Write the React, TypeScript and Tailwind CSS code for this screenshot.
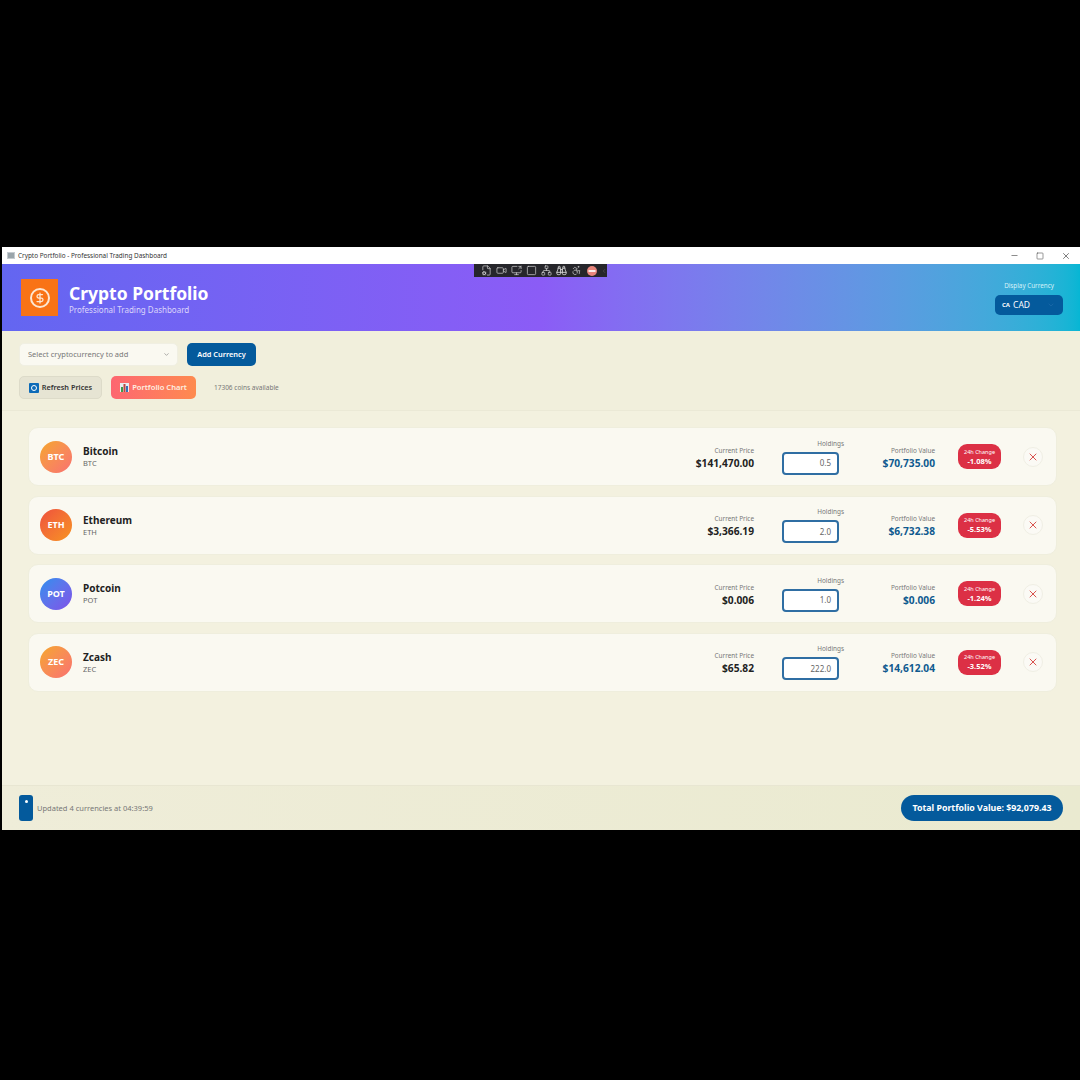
import { ChevronDown, DollarSign, Minus, Square, X, Video, ScreenShare, Accessibility, FileCog, Network, ChevronLeft, Binoculars } from 'lucide-react'

const coins = [
  { name: 'Bitcoin', sym: 'BTC', price: '$141,470.00', qty: '0.5', value: '$70,735.00', change: '-1.08%', avatar: 'bg-gradient-to-br from-[#f5a623] to-[#f9706f]' },
  { name: 'Ethereum', sym: 'ETH', price: '$3,366.19', qty: '2.0', value: '$6,732.38', change: '-5.53%', avatar: 'bg-gradient-to-br from-[#ee4f3c] to-[#f7931e]' },
  { name: 'Potcoin', sym: 'POT', price: '$0.006', qty: '1.0', value: '$0.006', change: '-1.24%', avatar: 'bg-gradient-to-br from-[#1d8fee] to-[#7c4fe8]' },
  { name: 'Zcash', sym: 'ZEC', price: '$65.82', qty: '222.0', value: '$14,612.04', change: '-3.52%', avatar: 'bg-gradient-to-br from-[#f5a623] to-[#f9706f]' },
]

function CoinRow({ coin }: { coin: (typeof coins)[number] }) {
  return (
    <div className="h-[59px] flex items-center pl-[11px] pr-[13px] bg-[#faf9f1] rounded-[10px] border border-[#efeedd]">
      <div className={`w-[32px] h-[32px] rounded-full flex items-center justify-center text-white text-[9px] font-bold ${coin.avatar}`}>{coin.sym}</div>
      <div className="ml-[11px] flex-1 flex flex-col">
        <span className="text-[10px] leading-[14px] font-bold text-[#222]">{coin.name}</span>
        <span className="text-[7.5px] leading-[11px] text-[#666]">{coin.sym}</span>
      </div>
      <div className="mt-[3px] flex flex-col items-end">
        <span className="text-[6.4px] leading-[10px] text-[#777]">Current Price</span>
        <span className="text-[10.2px] leading-[15px] font-bold text-[#222]">{coin.price}</span>
      </div>
      <div className="ml-[28px] w-[62px] flex flex-col items-end">
        <span className="text-[6.4px] leading-[10px] text-[#777]">Holdings</span>
        <div className="mt-[3px] mr-[5px] w-[57px] h-[23px] rounded-[4px] border-2 border-[#2f6ea3] bg-white flex items-center justify-end pr-[6px] text-[8px] text-[#666]">{coin.qty}</div>
      </div>
      <div className="ml-[11px] mt-[3px] w-[80px] flex flex-col items-end">
        <span className="text-[6.4px] leading-[10px] text-[#777]">Portfolio Value</span>
        <span className="text-[10.2px] leading-[15px] font-bold text-[#0f5a8f]">{coin.value}</span>
      </div>
      <div className="ml-[23px] w-[43px] h-[25px] rounded-[9px] bg-[#dc3045] flex flex-col items-center justify-center text-white">
        <span className="text-[5.5px] leading-[8px]">24h Change</span>
        <span className="text-[7.5px] leading-[10px] font-bold">{coin.change}</span>
      </div>
      <button className="ml-[22px] w-[20px] h-[20px] rounded-full bg-[#fbfaf5] border border-[#f0efe4] flex items-center justify-center">
        <X className="w-[12px] h-[12px] text-[#d9534f]" strokeWidth={2} />
      </button>
    </div>
  )
}

export default function App() {
  return (
    <div className="h-[1080px] bg-black pt-[247px] pl-[2px] font-['Noto_Sans',sans-serif] overflow-hidden">
      <div className="relative h-[583px] flex flex-col bg-[#f3f1df]">
        {/* title bar */}
        <div className="h-[17px] bg-white flex items-center pl-[5px] text-[#333]">
          <div className="w-[8px] h-[7px] bg-[#9aa5ab] border border-[#c5cbd0] mr-[3px]" />
          <span className="text-[6.4px]">Crypto Portfolio - Professional Trading Dashboard</span>
          <div className="ml-auto flex items-center">
            <Minus className="w-[9px] h-[9px] mr-[17px]" strokeWidth={1.5} />
            <Square className="w-[8px] h-[8px] mr-[17px]" strokeWidth={1.5} />
            <X className="w-[10px] h-[10px] mr-[9px]" strokeWidth={1.5} />
          </div>
        </div>

        {/* capture toolbar over the header */}
        <div className="absolute left-[472px] top-[17px] w-[133px] h-[13px] bg-[#26262b] flex items-center pl-[7px] gap-[4px] text-[#d4d4d4]">
          <FileCog className="w-[11px] h-[11px]" strokeWidth={1.5} />
          <Video className="w-[11px] h-[11px]" strokeWidth={1.5} />
          <ScreenShare className="w-[11px] h-[11px]" strokeWidth={1.5} />
          <Square className="w-[11px] h-[11px]" strokeWidth={1.5} />
          <Network className="w-[11px] h-[11px]" strokeWidth={1.5} />
          <Binoculars className="w-[11px] h-[11px]" strokeWidth={2} />
          <Accessibility className="w-[11px] h-[11px]" strokeWidth={1.5} />
          <svg viewBox="0 0 10 10" className="w-[10px] h-[10px] ml-[1px]">
            <circle cx="5" cy="5" r="5" fill="#e8857c" />
            <rect x="1.5" y="4" width="7" height="2" fill="#fbeeea" />
          </svg>
          <ChevronLeft className="w-[6px] h-[8px] text-[#666]" />
        </div>

        {/* header */}
        <header className="h-[67px] bg-gradient-to-r from-[#6366f1] via-[#8b5cf6] to-[#06b6d4] flex items-center pl-[19px] pr-[17px]">
          <div className="w-[37px] h-[37px] bg-[#f97316] flex items-center justify-center">
            <div className="w-[20px] h-[20px] rounded-full border-2 border-[#fde7d2] flex items-center justify-center">
              <DollarSign className="w-[12px] h-[12px] text-[#fde7d2]" strokeWidth={2.5} />
            </div>
          </div>
          <div className="ml-[11px] mt-[1px] flex flex-col">
            <span className="text-[17.5px] leading-[22px] font-bold text-white">Crypto Portfolio</span>
            <span className="text-[8px] leading-[11px] text-[#dcd6fb]">Professional Trading Dashboard</span>
          </div>
          <div className="ml-auto mt-[1px] flex flex-col items-center">
            <span className="text-[6.3px] leading-[10px] text-[#d5f1f8]">Display Currency</span>
            <div className="mt-[4px] w-[68px] h-[20px] rounded-[5px] bg-[#045a9c] flex items-center pl-[7px] pr-[8px] text-white">
              <span className="text-[6px] font-bold mr-[3px]">CA</span>
              <span className="text-[8.5px]">CAD</span>
              <ChevronDown className="ml-auto w-[8px] h-[8px] text-[#1f6cab]" />
            </div>
          </div>
        </header>

        {/* toolbar */}
        <div className="h-[80px] pt-[12px] pl-[17px] border-b border-[#ebe9d6] bg-[#f1efdc]">
          <div className="flex items-center">
            <div className="w-[159px] h-[23px] rounded-[5px] bg-[#faf9f1] border border-[#f0efe2] flex items-center pl-[8px] pr-[7px] text-[7.5px] text-[#777]">
              Select cryptocurrency to add
              <ChevronDown className="ml-auto w-[7px] h-[7px]" />
            </div>
            <button className="ml-[9px] w-[69px] h-[23px] rounded-[5px] bg-[#045a9c] text-white text-[7.4px] font-semibold">Add Currency</button>
          </div>
          <div className="mt-[10px] flex items-center">
            <button className="w-[83px] h-[23px] rounded-[5px] bg-[#e6e4d3] border border-[#dddbc9] flex items-center justify-center text-[7.3px] font-semibold text-[#333]">
              <span className="w-[10px] h-[10px] mr-[3px] rounded-[1px] bg-[#0d6bb8] flex items-center justify-center">
                <span className="w-[6px] h-[6px] rounded-full border border-white" />
              </span>
              Refresh Prices
            </button>
            <button className="ml-[9px] w-[85px] h-[23px] rounded-[5px] bg-gradient-to-r from-[#fd6670] to-[#fe8a4e] flex items-center justify-center text-[7.6px] font-semibold text-[#fdeee0]">
              <svg viewBox="0 0 9 9" className="w-[9px] h-[9px] mr-[3px]">
                <rect width="9" height="9" fill="#e8eef0" />
                <rect x="1" y="4" width="2" height="5" fill="#3f9a4a" />
                <rect x="3.5" y="1" width="2" height="8" fill="#c0453f" />
                <rect x="6" y="3" width="2" height="6" fill="#3a6fb5" />
              </svg>
              Portfolio Chart
            </button>
            <span className="ml-[18px] mt-[1px] text-[6.5px] text-[#777]">17306 coins available</span>
          </div>
        </div>

        {/* coin list */}
        <main className="flex-1 pt-[16px] pl-[26px] pr-[23px] flex flex-col gap-[9.5px]">
          {coins.map((coin) => <CoinRow key={coin.sym} coin={coin} />)}
        </main>

        {/* footer */}
        <footer className="h-[45px] bg-gradient-to-r from-[#efedd9] to-[#eaead0] border-t border-[#e8e6d2] flex items-center pl-[17px] pr-[17px]">
          <div className="w-[14px] h-[26px] rounded-[3px] bg-[#045a9c] flex justify-center pt-[5px]">
            <span className="w-[3px] h-[3px] rounded-full bg-white" />
          </div>
          <span className="ml-[4px] mt-[1px] text-[7.5px] text-[#777]">Updated 4 currencies at 04:39:59</span>
          <div className="ml-auto w-[162px] h-[26px] pt-[2px] rounded-[13px] bg-[#045a9c] flex items-center justify-center text-[8.8px] font-bold text-white">Total Portfolio Value: $92,079.43</div>
        </footer>
      </div>
    </div>
  )
}
